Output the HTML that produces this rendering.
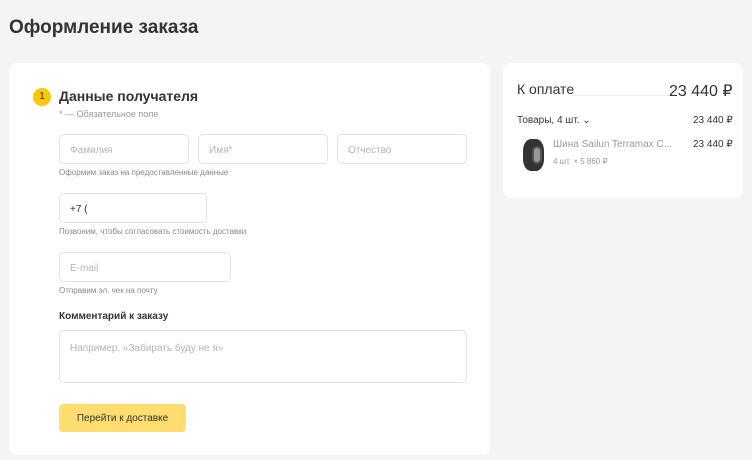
<!DOCTYPE html>
<html><head><meta charset="utf-8"><style>
*{box-sizing:border-box;margin:0;padding:0}
body{width:752px;height:460px;background:#f3f4f4;font-family:"Liberation Sans",sans-serif;position:relative;overflow:hidden;color:#333}
.a{position:absolute}
h1{position:absolute;left:9px;top:17px;font-size:19px;font-weight:bold;color:#333}
.card{position:absolute;background:#fff;border-radius:8px}
.in{position:absolute;border:1px solid #e2e2e2;border-radius:5px;height:30px;font-size:10px;color:#b4b4b4;padding:10px 10px 0}
.hint{position:absolute;font-size:8px;color:#888}
</style></head><body>
<h1>Оформление заказа</h1>
<div class="card" style="left:9px;top:63px;width:481px;height:392px"></div>
<div class="a" style="left:33px;top:88px;width:18px;height:18px;border-radius:50%;background:#fcc800;font-size:10px;text-align:center;line-height:18px;color:#333">1</div>
<div class="a" style="left:59px;top:88px;font-size:14px;font-weight:bold;color:#333">Данные получателя</div>
<div class="a" style="left:59px;top:109px;font-size:9px;color:#999">* — Обязательное поле</div>
<div class="in" style="left:59px;top:134px;width:130px">Фамилия</div>
<div class="in" style="left:198px;top:134px;width:130px">Имя*</div>
<div class="in" style="left:337px;top:134px;width:130px">Отчество</div>
<div class="hint" style="left:59px;top:168px">Оформим заказ на предоставленные данные</div>
<div class="in" style="left:59px;top:193px;width:148px;color:#333">+7 (</div>
<div class="hint" style="left:59px;top:227px">Позвоним, чтобы согласовать стоимость доставки</div>
<div class="in" style="left:59px;top:252px;width:172px">E-mail</div>
<div class="hint" style="left:59px;top:286px">Отправим эл. чек на почту</div>
<div class="a" style="left:59px;top:311px;font-size:10px;font-weight:bold;color:#333">Комментарий к заказу</div>
<div class="in" style="left:59px;top:330px;width:408px;height:53px;padding-top:12px">Например, «Забирать буду не я»</div>
<div class="a" style="left:59px;top:404px;width:127px;height:28px;background:#ffdd6e;border-radius:4px;font-size:10px;text-align:center;line-height:29px;color:#333">Перейти к доставке</div>
<div class="card" style="left:503px;top:63px;width:240px;height:135px"></div>
<div class="a" style="left:517px;top:81px;font-size:14px;color:#333">К оплате</div>
<div class="a" style="left:572px;top:95px;width:98px;border-top:1px solid #eee"></div>
<div class="a" style="left:669px;top:81px;font-size:16px;color:#333">23 440 ₽</div>
<div class="a" style="left:517px;top:115px;font-size:10px;color:#333">Товары, 4 шт. <span style="font-size:10px">⌄</span></div>
<div class="a" style="left:693px;top:115px;font-size:10px;color:#333">23 440 ₽</div>
<div class="a" style="left:523px;top:139px;width:21px;height:32px;border-radius:8px/12px;background:#333"></div>
<div class="a" style="left:532px;top:146px;width:10px;height:18px;border-radius:5px;background:#999;border:2px solid #555"></div>
<div class="a" style="left:553px;top:139px;font-size:10px;color:#999">Шина Sailun Terramax C...</div>
<div class="a" style="left:553px;top:157px;font-size:8px;color:#999">4 шт. × 5 860 ₽</div>
<div class="a" style="left:693px;top:139px;font-size:10px;color:#333">23 440 ₽</div>
</body></html>
